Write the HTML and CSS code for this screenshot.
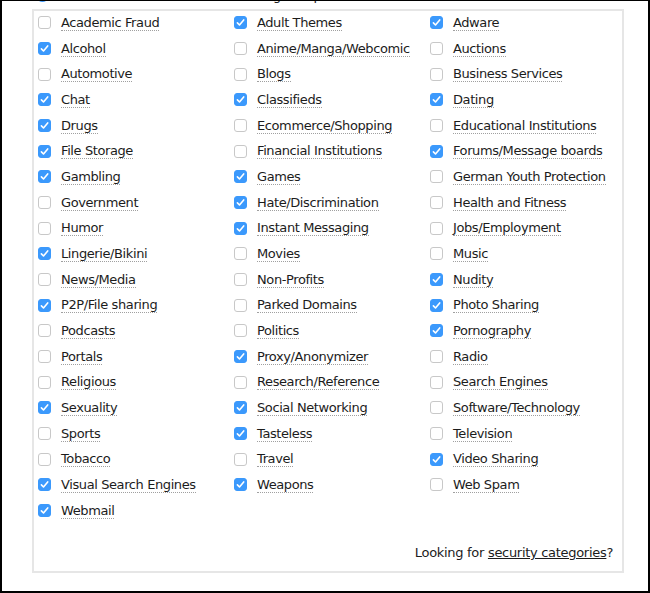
FILE: index.html
```html
<!DOCTYPE html>
<html lang="en">
  <head>
    <meta charset="UTF-8" />
    <meta name="viewport" content="width=device-width, initial-scale=1.0" />
    <title>Blocked categories</title>
    <link rel="stylesheet" href="styles.css">
  </head>
  <body>
    <div class="frame">
      <!-- scope row (scrolled mostly out of view) -->
      <div class="scope-row">
        <span class="radio"></span>
        <span class="scope-text">Block all the websites that belong in a profile</span>
      </div>

      <!-- category panel -->
      <div class="panel">
        <div class="cat-grid" id="catGrid"></div>
        <p class="panel-foot">Looking for <a href="#">security categories</a>?</p>
      </div>
    </div>
    <script>
      // category list : [name, checked]
      const cats = [
        ["Academic Fraud", 0], ["Adult Themes", 1], ["Adware", 1],
        ["Alcohol", 1], ["Anime/Manga/Webcomic", 0], ["Auctions", 0],
        ["Automotive", 0], ["Blogs", 0], ["Business Services", 0],
        ["Chat", 1], ["Classifieds", 1], ["Dating", 1],
        ["Drugs", 1], ["Ecommerce/Shopping", 0], ["Educational Institutions", 0],
        ["File Storage", 1], ["Financial Institutions", 0], ["Forums/Message boards", 1],
        ["Gambling", 1], ["Games", 1], ["German Youth Protection", 0],
        ["Government", 0], ["Hate/Discrimination", 1], ["Health and Fitness", 0],
        ["Humor", 0], ["Instant Messaging", 1], ["Jobs/Employment", 0],
        ["Lingerie/Bikini", 1], ["Movies", 0], ["Music", 0],
        ["News/Media", 0], ["Non-Profits", 0], ["Nudity", 1],
        ["P2P/File sharing", 1], ["Parked Domains", 0], ["Photo Sharing", 1],
        ["Podcasts", 0], ["Politics", 0], ["Pornography", 1],
        ["Portals", 0], ["Proxy/Anonymizer", 1], ["Radio", 0],
        ["Religious", 0], ["Research/Reference", 0], ["Search Engines", 0],
        ["Sexuality", 1], ["Social Networking", 1], ["Software/Technology", 0],
        ["Sports", 0], ["Tasteless", 1], ["Television", 0],
        ["Tobacco", 0], ["Travel", 0], ["Video Sharing", 1],
        ["Visual Search Engines", 1], ["Weapons", 1], ["Web Spam", 0],
        ["Webmail", 1]
      ];

      const check =
        '<svg viewBox="0 0 13 13" width="13" height="13"><path d="M3.4 6.9 L5.5 9 L9.7 3.9" fill="none" stroke="#fff" stroke-width="1.6" stroke-linecap="round" stroke-linejoin="round"/></svg>';

      const grid = document.getElementById("catGrid");
      cats.forEach(([name, on]) => {
        const lb = document.createElement("label");
        lb.className = "cat-item";
        lb.innerHTML =
          `<span class="box${on ? " on" : ""}">${on ? check : ""}</span>` +
          `<span class="cat-name">${name}</span>`;
        grid.appendChild(lb);
      }); //// forEach ////
    </script>
  </body>
</html>
```

FILE: styles.css
```css
/* reset */
html,
body,
p {
  margin: 0;
  padding: 0;
}
body {
  font-family: "DejaVu Sans", Verdana, sans-serif;
  font-size: 13px;
  color: #1c1c1c;
  background: #fff;
}

/* outer frame */
.frame {
  box-sizing: border-box;
  width: 650px;
  height: 593px;
  border: 2px solid #000;
  border-top-width: 1px;
  overflow: hidden;
}

/* scope row - only the bottom edge shows */
.scope-row {
  display: flex;
  align-items: center;
  gap: 12px;
  height: 14px;
  margin: -13px 0 7px;
  padding-left: 34px;
  white-space: nowrap;
}
.radio {
  width: 13px;
  height: 13px;
  border-radius: 50%;
  background: #3b99fc;
  flex: none;
}

/* category panel */
.panel {
  margin: 0 24px 0 30px;
  border: 2px solid #e6e6e6;
}
.cat-grid {
  display: grid;
  grid-template-columns: repeat(3, 1fr);
  grid-auto-rows: 25.68px;
  margin-top: -1px;
}
.cat-item {
  display: flex;
  align-items: center;
  gap: 10px;
  padding-left: 4px;
  letter-spacing: -0.4px;
  white-space: nowrap;
}
.cat-name {
  border-bottom: 1px dotted #a0a0a0;
}

/* checkbox */
.box {
  box-sizing: border-box;
  width: 13px;
  height: 13px;
  flex: none;
  border: 1px solid #c8c8c8;
  border-radius: 3px;
  background: #fff;
}
.box.on {
  border-color: #3b99fc;
  background: #3b99fc;
}
.box svg {
  display: block;
  margin: -1px;
}

/* footer line */
.panel-foot {
  margin-top: 22px;
  padding: 0 9px 11px 0;
  text-align: right;
  letter-spacing: -0.3px;
}
.panel-foot a {
  color: #1c1c1c;
}
```
